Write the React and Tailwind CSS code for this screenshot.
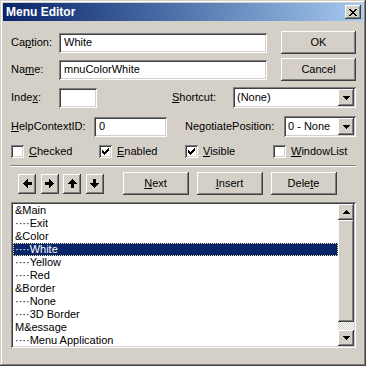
import React from "react";

const RAISED =
  "bg-[#d4d0c8] shadow-[inset_-1px_-1px_0_#404040,inset_1px_1px_0_#ffffff,inset_-2px_-2px_0_#808080,inset_2px_2px_0_#d4d0c8]";
const SUNKEN =
  "bg-white shadow-[inset_1px_1px_0_#808080,inset_-1px_-1px_0_#ffffff,inset_2px_2px_0_#404040,inset_-2px_-2px_0_#d4d0c8]";

function U({ children }) {
  return <span className="underline underline-offset-[1px]">{children}</span>;
}

function TextBox({ w, value }) {
  return (
    <div className={`${SUNKEN} h-[20px] flex items-center pl-[5px] shrink-0`} style={{ width: w }}>
      <span className="leading-none">{value}</span>
    </div>
  );
}

function DownTri() {
  return (
    <svg width="7" height="4" viewBox="0 0 7 4" shapeRendering="crispEdges">
      <path d="M0 0H7V1H6V2H5V3H4V4H3V3H2V2H1V1H0Z" fill="#000" />
    </svg>
  );
}

function UpTri() {
  return (
    <svg width="7" height="4" viewBox="0 0 7 4" shapeRendering="crispEdges">
      <path d="M3 0H4V1H5V2H6V3H7V4H0V3H1V2H2V1H3Z" fill="#000" />
    </svg>
  );
}

function Combo({ w, value }) {
  return (
    <div className={`${SUNKEN} h-[21px] flex items-center pl-[4px] pr-[2px] shrink-0`} style={{ width: w }}>
      <span className="leading-none flex-1">{value}</span>
      <div className={`${RAISED} w-[16px] h-[17px] flex items-center justify-center`}>
        <DownTri />
      </div>
    </div>
  );
}

function Button({ w, h = 23, children }) {
  return (
    <div className={`${RAISED} flex items-center justify-center shrink-0`} style={{ width: w, height: h }}>
      {children}
    </div>
  );
}

function Check({ checked }) {
  return (
    <div className={`${SUNKEN} w-[13px] h-[13px] flex items-center justify-center shrink-0`}>
      {checked && (
        <svg width="7" height="7" viewBox="0 0 7 7" shapeRendering="crispEdges">
          <path
            d="M6 0H7V3H6V4H5V5H4V6H3V7H2V6H1V5H0V2H1V3H2V4H3V3H4V2H5V1H6Z"
            fill="#000"
          />
        </svg>
      )}
    </div>
  );
}

function CheckItem({ checked, children, w }) {
  return (
    <div className="flex items-center gap-[5px] shrink-0" style={{ width: w }}>
      <Check checked={checked} />
      <span className="leading-none">{children}</span>
    </div>
  );
}

function Arrow({ dir }) {
  const paths = {
    left: "M0 4H1V3H2V2H3V1H4V0H5V3H9V6H5V9H4V8H3V7H2V6H1V5H0Z",
    right: "M9 4H8V3H7V2H6V1H5V0H4V3H0V6H4V9H5V8H6V7H7V6H8V5H9Z",
    up: "M4 0H5V1H6V2H7V3H8V4H9V5H6V9H3V5H0V4H1V3H2V2H3V1H4Z",
    down: "M4 9H5V8H6V7H7V6H8V5H9V4H6V0H3V4H0V5H1V6H2V7H3V8H4Z",
  };
  return (
    <div className={`${RAISED} w-[18px] h-[20px] flex items-center justify-center shrink-0`}>
      <svg width="9" height="9" viewBox="0 0 9 9" shapeRendering="crispEdges">
        <path d={paths[dir]} fill="#000" />
      </svg>
    </div>
  );
}

const items = [
  "&Main",
  "····Exit",
  "&Color",
  "····White",
  "····Yellow",
  "····Red",
  "&Border",
  "····None",
  "····3D Border",
  "M&essage",
  "····Menu Application",
];

export default function App() {
  return (
    <div
      className="w-[366px] h-[366px] bg-[#d4d0c8] p-[3px] flex flex-col text-[11px] text-black font-['Liberation_Sans',Arial,sans-serif] shadow-[inset_-1px_-1px_0_#404040,inset_1px_1px_0_#d4d0c8,inset_-2px_-2px_0_#808080,inset_2px_2px_0_#ffffff] overflow-hidden select-none"
    >
      {/* Title bar */}
      <div className="h-[18px] bg-gradient-to-r from-[#0a246a] to-[#a6caf0] flex items-center pl-[2px] pr-[2px] shrink-0">
        <span className="text-white font-bold text-[12px] leading-none pl-[1px]">Menu Editor</span>
        <div className={`${RAISED} ml-auto w-[16px] h-[14px] flex items-center justify-center`}>
          <svg width="8" height="7" viewBox="0 0 8 7" shapeRendering="crispEdges">
            <path
              d="M0 0H2V1H3V2H5V1H6V0H8V1H7V2H6V3H5V4H6V5H7V6H8V7H6V6H5V5H3V6H2V7H0V6H1V5H2V4H3V3H2V2H1V1H0Z"
              fill="#000"
            />
          </svg>
        </div>
      </div>

      {/* Content */}
      <div className="flex flex-col pl-[8px] pr-[7px]">
        {/* Caption row */}
        <div className="mt-[10px] h-[23px] flex items-center">
          <span className="w-[48px] shrink-0 leading-none">
            Ca<U>p</U>tion:
          </span>
          <TextBox w={208} value="White" />
          <div className="ml-auto">
            <Button w={75}>OK</Button>
          </div>
        </div>

        {/* Name row */}
        <div className="mt-[4px] h-[23px] flex items-center">
          <span className="w-[48px] shrink-0 leading-none">
            Na<U>m</U>e:
          </span>
          <TextBox w={208} value="mnuColorWhite" />
          <div className="ml-auto">
            <Button w={75}>Cancel</Button>
          </div>
        </div>

        {/* Index / Shortcut row */}
        <div className="mt-[6px] h-[21px] flex items-center">
          <span className="w-[48px] shrink-0 leading-none">
            Inde<U>x</U>:
          </span>
          <TextBox w={38} value="" />
          <span className="ml-[75px] w-[61px] shrink-0 leading-none">
            <U>S</U>hortcut:
          </span>
          <Combo w={123} value="(None)" />
        </div>

        {/* HelpContextID / NegotiatePosition row */}
        <div className="mt-[8px] h-[21px] flex items-center">
          <span className="w-[83px] shrink-0 leading-none">
            <U>H</U>elpContextID:
          </span>
          <TextBox w={73} value="0" />
          <span className="ml-[18px] w-[99px] shrink-0 leading-none">
            Ne<U>g</U>otiatePosition:
          </span>
          <Combo w={72} value="0 - None" />
        </div>

        {/* Checkboxes */}
        <div className="mt-[8px] h-[13px] flex items-center">
          <CheckItem w={88}>
            <U>C</U>hecked
          </CheckItem>
          <CheckItem w={86} checked>
            <U>E</U>nabled
          </CheckItem>
          <CheckItem w={88} checked>
            <U>V</U>isible
          </CheckItem>
          <CheckItem>
            <U>W</U>indowList
          </CheckItem>
        </div>

        {/* Separator */}
        <div className="mt-[7px] -ml-[1px] h-[2px] border-t border-t-[#808080] border-b border-b-white" />

        {/* Buttons row */}
        <div className="mt-[5px] h-[23px] flex items-center">
          <div className="ml-[7px] flex gap-[4.5px]">
            <Arrow dir="left" />
            <Arrow dir="right" />
            <Arrow dir="up" />
            <Arrow dir="down" />
          </div>
          <div className="ml-[19px] flex gap-[8px]">
            <Button w={66}>
              <span>
                <U>N</U>ext
              </span>
            </Button>
            <Button w={66}>
              <span>
                <U>I</U>nsert
              </span>
            </Button>
            <Button w={66}>
              <span>
                Dele<U>t</U>e
              </span>
            </Button>
          </div>
        </div>

        {/* List */}
        <div className={`${SUNKEN} mt-[7px] h-[146px] w-[345px] p-[2px] flex`}>
          <div className="flex-1 flex flex-col overflow-hidden">
            {items.map((t, i) =>
              i === 3 ? (
                <div
                  key={i}
                  className="h-[13px] shrink-0 bg-[#0a246a] text-white leading-[11px] pl-[1px] border border-dotted border-[#f2e9a4] whitespace-pre"
                >
                  {t}
                </div>
              ) : (
                <div key={i} className="h-[13px] shrink-0 leading-[13px] pl-[2px] whitespace-pre">
                  {t}
                </div>
              )
            )}
          </div>
          {/* Scrollbar */}
          <div className="w-[16px] flex flex-col shrink-0">
            <div className={`${RAISED} h-[16px] flex items-center justify-center shrink-0`}>
              <UpTri />
            </div>
            <div className={`${RAISED} h-[102px] shrink-0`} />
            <div className="flex-1 bg-[repeating-conic-gradient(#ffffff_0_25%,#d4d0c8_0_50%)] bg-[length:2px_2px]" />
            <div className={`${RAISED} h-[16px] flex items-center justify-center shrink-0`}>
              <DownTri />
            </div>
          </div>
        </div>
      </div>
    </div>
  );
}
